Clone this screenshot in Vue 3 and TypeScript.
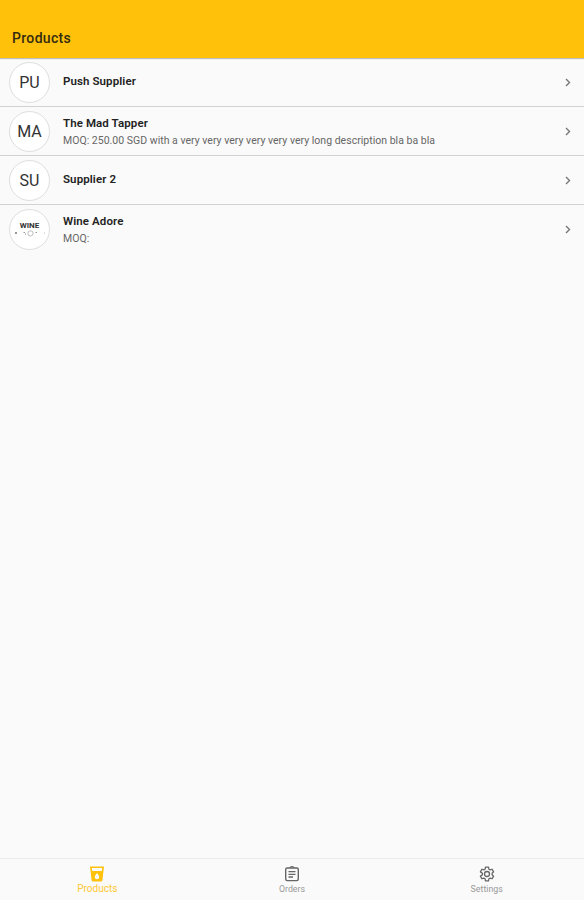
<script setup lang="ts">
interface Supplier {
  name: string
  initials?: string
  note?: string
}

const suppliers: Supplier[] = [
  { name: 'Push Supplier', initials: 'PU' },
  { name: 'The Mad Tapper', initials: 'MA', note: 'MOQ: 250.00 SGD with a very very very very very very long description bla ba bla' },
  { name: 'Supplier 2', initials: 'SU' },
  { name: 'Wine Adore', note: 'MOQ:' },
]
</script>

<template>
  <div class="app">
    <header class="header"><h1>Products</h1></header>
    <main class="list">
      <div v-for="s in suppliers" :key="s.name" class="row">
        <div class="avatar">
          <template v-if="s.initials">{{ s.initials }}</template>
          <div v-else class="logo">
            <span class="logo-name">WINE</span>
            <svg width="32" height="7" viewBox="0 0 32 7">
              <circle cx="2" cy="3" r="0.9" fill="#666" />
              <path d="M9.5 2.500h1.500M11 4h1M21.500 2.500h1.500" stroke="#999" fill="none" />
              <circle cx="16.500" cy="3.400" r="2.600" stroke="#aaa" stroke-width="0.8" fill="none" />
              <circle cx="30.500" cy="3" r="0.6" fill="#bbb" />
            </svg>
          </div>
        </div>
        <div class="info" :class="{ 'with-note': s.note }">
          <div class="name">{{ s.name }}</div>
          <div v-if="s.note" class="note">{{ s.note }}</div>
        </div>
        <svg class="chevron" width="6" height="9" viewBox="0 0 6 9">
          <path d="M1 1l3.500 3.500L1 8" fill="none" stroke="#777" stroke-width="1.400" />
        </svg>
      </div>
    </main>
    <nav class="tabs">
      <div class="tab active">
        <svg width="16" height="16" viewBox="0 0 16 16">
          <path fill="#ffc10a" fill-rule="evenodd" d="M1 0.500h14L13.400 14.200Q13.200 15.500 12 15.500H4Q2.800 15.500 2.600 14.200ZM2.800 2l.35 3h9.700l.35-3ZM8 7Q5.700 9.500 5.700 11a2.300 2.300 0 0 0 4.600 0Q10.300 9.500 8 7Z" />
        </svg>
        <span>Products</span>
      </div>
      <div class="tab">
        <svg width="16" height="16" viewBox="0 0 16 16">
          <rect x="1.700" y="2" width="12.600" height="12.600" rx="1.500" fill="none" stroke="#666" stroke-width="1.400" />
          <path d="M6 2V1.200Q8-.3 10 1.200V2" fill="#888" stroke="#666" />
          <path d="M4.500 5.600h7M4.500 8.300h7M4.500 11h4.500" stroke="#666" stroke-width="1.300" />
        </svg>
        <span>Orders</span>
      </div>
      <div class="tab">
        <svg width="16" height="16" viewBox="0 0 16 16" fill="none" stroke="#666" stroke-width="1.300" stroke-linejoin="round">
          <path d="M6.500 1.200h3l.4 2 1.300.75 1.900-.7 1.500 2.600-1.500 1.350v1.600l1.500 1.350-1.500 2.600-1.900-.7-1.300.75-.4 2h-3l-.4-2-1.300-.75-1.900.7-1.500-2.600L3.400 8.800V7.200L1.400 5.850l1.500-2.600 1.900.7 1.300-.75Z" />
          <circle cx="8" cy="8" r="2.500" />
        </svg>
        <span>Settings</span>
      </div>
    </nav>
  </div>
</template>

<style>
body { background: #fafafa; }
</style>

<style scoped>
.app {
  display: flex;
  flex-direction: column;
  height: 900px;
  background: #fafafa;
  font-family: Roboto, "Liberation Sans", sans-serif;
  color: #222;
}
.header {
  box-sizing: border-box;
  height: 58px;
  padding: 29px 12px 0;
  background: #ffc10a;
  box-shadow: 0 1px 1px rgba(0, 0, 0, 0.24);
}
h1 {
  margin: 0;
  font-size: 14px;
  line-height: 19px;
  font-weight: 500;
  letter-spacing: 0.33px;
  color: #352b10;
}
.list { flex: 1; }
.row {
  box-sizing: border-box;
  display: flex;
  align-items: center;
  height: 49.1px;
  padding: 0 13px 0 9px;
  border-bottom: 1px solid #d2d2d2;
}
.row:last-child { border-bottom-color: transparent; }
.avatar {
  box-sizing: border-box;
  flex: none;
  display: flex;
  align-items: center;
  justify-content: center;
  width: 41px;
  height: 41px;
  border: 1px solid #dedede;
  border-radius: 50%;
  background: #fff;
  font-size: 16px;
  color: #333;
}
.logo {
  display: flex;
  flex-direction: column;
  align-items: center;
}
.logo-name {
  font-size: 8px;
  line-height: 8px;
  font-weight: 700;
}
.info {
  flex: 1;
  margin-left: 13px;
  padding-bottom: 2px;
}
.info.with-note { padding: 2px 0 0; }
.name {
  font-size: 11.5px;
  line-height: 17px;
  font-weight: 600;
  letter-spacing: 0.1px;
}
.note {
  font-size: 10.5px;
  line-height: 17px;
  letter-spacing: 0.015px;
  color: #666;
  white-space: nowrap;
}
.tabs {
  box-sizing: border-box;
  display: flex;
  height: 42px;
  border-top: 1px solid #ececec;
}
.tab {
  flex: 1;
  display: flex;
  flex-direction: column;
  align-items: center;
  padding-top: 7px;
  font-size: 8.8px;
  line-height: 14px;
  color: #999;
}
.tab.active {
  color: #ffc933;
  font-size: 10px;
}
</style>
